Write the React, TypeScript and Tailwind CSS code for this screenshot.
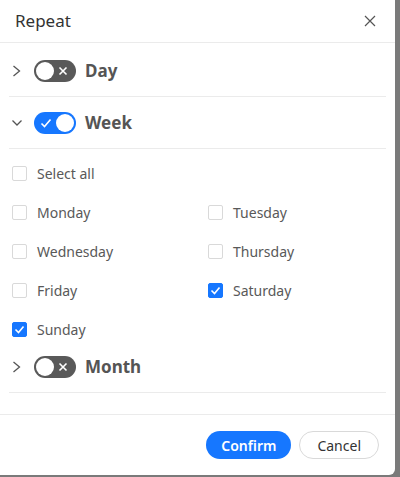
import { useState } from "react";

const days = ["Monday", "Tuesday", "Wednesday", "Thursday", "Friday", "Saturday", "Sunday"];

function Chevron({ open }: { open: boolean }) {
  return (
    <svg width="10" height="14" viewBox="0 0 10 14" className="text-[#555]">
      {open ? (
        <path d="M0.5 4.5l4.5 4.5 4.5-4.5" fill="none" stroke="currentColor" strokeWidth="1.3" />
      ) : (
        <path d="M1.5 2l6 5-6 5" fill="none" stroke="currentColor" strokeWidth="1.3" />
      )}
    </svg>
  );
}

function Toggle({ on }: { on: boolean }) {
  return (
    <div
      className={`relative flex h-[22px] w-[42px] items-center rounded-full ${
        on ? "bg-[#1677ff]" : "bg-[#595959]"
      }`}
    >
      {on ? (
        <>
          <svg width="12" height="12" viewBox="0 0 12 12" className="absolute left-[6px]">
            <path d="M1.5 6.5l3 3 6-7" fill="none" stroke="white" strokeWidth="1.6" />
          </svg>
          <span className="absolute right-[2px] h-[18px] w-[18px] rounded-full bg-white" />
        </>
      ) : (
        <>
          <span className="absolute left-[2px] h-[18px] w-[18px] rounded-full bg-white" />
          <svg width="10" height="10" viewBox="0 0 10 10" className="absolute right-[8px]">
            <path d="M1.5 1.5l7 7M8.5 1.5l-7 7" fill="none" stroke="white" strokeWidth="1.6" />
          </svg>
        </>
      )}
    </div>
  );
}

function Check({ checked, label }: { checked: boolean; label: string }) {
  return (
    <label className="flex h-[22px] items-center gap-[10px]">
      <span
        className={`flex h-[15px] w-[15px] items-center justify-center rounded-[2px] border ${
          checked ? "border-[#1677ff] bg-[#1677ff]" : "border-[#d9d9d9] bg-white"
        }`}
      >
        {checked && (
          <svg width="11" height="11" viewBox="0 0 11 11">
            <path d="M1.5 5.5l3 3 5-6" fill="none" stroke="white" strokeWidth="1.6" />
          </svg>
        )}
      </span>
      <span className="text-[14px] text-[#595959]">{label}</span>
    </label>
  );
}

function Section({ title, open }: { title: string; open: boolean }) {
  return (
    <div className="flex h-[52px] items-center gap-[12px] border-b border-[#ebebeb] pl-[3px]">
      <Chevron open={open} />
      <div className="flex items-center gap-[9px]">
        <Toggle on={open} />
        <span className="text-[17px] font-bold text-[#555]">{title}</span>
      </div>
    </div>
  );
}

export default function App() {
  const [checked] = useState<string[]>(["Saturday", "Sunday"]);

  return (
    <div
      className="flex h-[477px] w-[400px] bg-[#7a7a7a]"
      style={{ fontFamily: '"Noto Sans", "Open Sans", sans-serif' }}
    >
      <div className="flex h-[475px] w-[395px] flex-col rounded-br-[6px] bg-white">
        <div className="flex h-[43px] shrink-0 items-center justify-between border-b border-[#ebebeb] pl-[15px] pr-[19px]">
          <span className="text-[17px] text-[#333]">Repeat</span>
          <svg width="12" height="12" viewBox="0 0 12 12">
            <path d="M1 1l10 10M11 1L1 11" fill="none" stroke="#555" strokeWidth="1.2" />
          </svg>
        </div>

        <div className="flex flex-col px-[9px] pt-[2px]">
          <Section title="Day" open={false} />
          <Section title="Week" open={true} />
          <div className="flex flex-col gap-[17px] pb-[1px] pl-[3px] pt-[13px]">
            <Check checked={false} label="Select all" />
            <div className="grid grid-cols-[196px_1fr] gap-y-[17px]">
              {days.map((d) => (
                <Check key={d} checked={checked.includes(d)} label={d} />
              ))}
            </div>
          </div>
          <Section title="Month" open={false} />
        </div>

        <div className="mt-auto flex h-[61px] shrink-0 items-center justify-end gap-[8px] border-t border-[#ebebeb] pr-[16px]">
          <button className="h-[28px] rounded-full bg-[#1677ff] px-[15px] text-[14px] font-semibold text-white">
            Confirm
          </button>
          <button className="h-[28px] rounded-full border border-[#d9d9d9] bg-white px-[17px] text-[14px] text-[#333]">
            Cancel
          </button>
        </div>
      </div>
    </div>
  );
}
